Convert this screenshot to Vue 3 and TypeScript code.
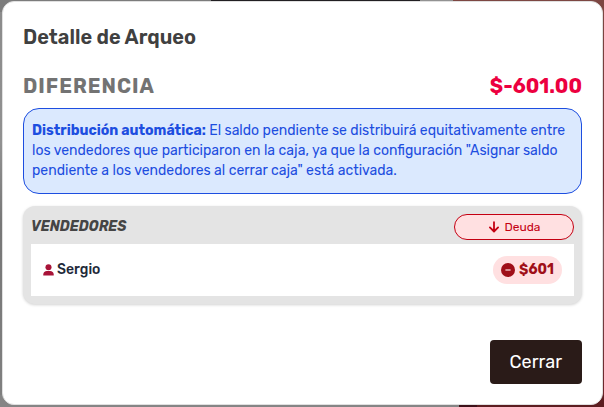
<script setup lang="ts">
import { computed, ref } from 'vue'

interface Seller {
  id: number
  name: string
  debt: number
}

const isOpen = ref(true)
const sellers = ref<Seller[]>([{ id: 1, name: 'Sergio', debt: 601 }])
const difference = computed(() => -sellers.value.reduce((sum, s) => sum + s.debt, 0))
</script>

<template>
  <div class="backdrop">
    <section v-if="isOpen" class="dialog" role="dialog" aria-labelledby="dialog-title">
      <h2 id="dialog-title" class="title">Detalle de Arqueo</h2>

      <div class="difference">
        <span class="difference-label">DIFERENCIA</span>
        <span class="difference-value">${{ difference.toFixed(2) }}</span>
      </div>

      <p class="notice">
        <strong>Distribución automática:</strong> El saldo pendiente se distribuirá
        equitativamente entre los vendedores que participaron en la caja, ya que la
        configuración "Asignar saldo pendiente a los vendedores al cerrar caja" está activada.
      </p>

      <div class="sellers">
        <header class="sellers-head">
          <h3 class="sellers-title">VENDEDORES</h3>
          <span class="debt-tag">
            <svg class="arrow" viewBox="0 0 12 12" aria-hidden="true">
              <path d="M6 1.2v9M1.9 6.4 6 10.5l4.1-4.1" />
            </svg>
            Deuda
          </span>
        </header>
        <ul class="seller-list">
          <li v-for="seller in sellers" :key="seller.id" class="seller">
            <span class="seller-name">
              <svg class="person" viewBox="0 0 12 14" aria-hidden="true">
                <circle cx="6" cy="4" r="3.3" />
                <path d="M.3 13v-1.1C.3 9.6 2.1 8.2 4.2 8.2h3.6c2.1 0 3.9 1.4 3.9 3.7V13z" />
              </svg>
              {{ seller.name }}
            </span>
            <span class="amount">
              <svg class="minus" viewBox="0 0 14 14" aria-hidden="true">
                <circle cx="7" cy="7" r="7" />
                <path d="M4.4 7h5.2" />
              </svg>
              ${{ seller.debt }}
            </span>
          </li>
        </ul>
      </div>

      <footer class="actions">
        <button type="button" class="close" @click="isOpen = false">Cerrar</button>
      </footer>
    </section>
  </div>
</template>

<style>
body {
  margin: 0;
}
</style>

<style scoped>
.backdrop {
  box-sizing: border-box;
  min-height: 100vh;
  padding: 1px 1px 2px 2px;
  display: flex;
  font-family: Rubik, Roboto, "Noto Sans", sans-serif;
  background:
    linear-gradient(90deg, #7c7c7c 35%, #211f22 35% 69.5%, #929292 69.5% 75%, #7d4742 75%) top / 100% 12px no-repeat,
    linear-gradient(90deg, #858585 76%, #3d1119 76% 79%, #5c1d20 79%) bottom / 100% 12px no-repeat,
    linear-gradient(#7c4943, #6f2b32 45%, #7b5356 60%, #6a2025) right / 50% 100% no-repeat,
    linear-gradient(#8b8b8b, #919191 35%, #777 55%, #808080);
}

.dialog {
  box-sizing: border-box;
  flex: 1;
  display: flex;
  flex-direction: column;
  padding: 20px;
  border: 1px solid #e0e0e0;
  border-radius: 12px;
  background: #fff;
}

h2,
h3,
p,
ul {
  margin: 0;
}

.title {
  font-size: 20px;
  line-height: 30px;
  font-weight: 600;
  color: #404040;
}

.difference {
  display: flex;
  justify-content: space-between;
  margin-top: 18px;
  font-size: 20px;
  line-height: 32px;
  font-weight: 700;
}

.difference-label {
  color: #737373;
  letter-spacing: 1px;
}

.difference-value {
  color: #ec003f;
}

.notice {
  margin-top: 6px;
  padding: 12px 8px;
  border: 1px solid #1d4ee0;
  border-radius: 16px;
  background: #dbe9fe;
  color: #1d4ee0;
  font-size: 14px;
  line-height: 20px;
}

.sellers {
  margin-top: 12px;
  padding: 8px;
  border-radius: 12px;
  background: #e4e4e4;
  box-shadow: 0 1px 3px rgb(0 0 0 / 18%);
}

.sellers-head {
  display: flex;
  justify-content: space-between;
}

.sellers-title {
  font-size: 14px;
  line-height: 26px;
  font-weight: 700;
  font-style: italic;
  color: #454545;
}

.debt-tag {
  box-sizing: border-box;
  width: 120px;
  height: 26px;
  display: flex;
  align-items: center;
  justify-content: center;
  gap: 5px;
  border: 1px solid #c40012;
  border-radius: 13px;
  background: #ffe0e1;
  color: #c40012;
  font-size: 12px;
}

.arrow {
  width: 12px;
  height: 12px;
  fill: none;
  stroke: currentColor;
  stroke-width: 1.8;
  stroke-linecap: round;
  stroke-linejoin: round;
}

.seller-list {
  margin-top: 4px;
  padding: 0;
  list-style: none;
  background: #fff;
}

.seller {
  display: flex;
  justify-content: space-between;
  padding: 12px;
}

.seller-name {
  display: flex;
  align-items: center;
  gap: 3px;
  font-size: 14px;
  font-weight: 500;
  line-height: 28px;
  color: #1e2939;
}

.person {
  width: 11px;
  height: 14px;
  fill: #a81338;
}

.amount {
  display: flex;
  align-items: center;
  gap: 4px;
  padding: 0 8px;
  border-radius: 14px;
  background: #ffe0e1;
  color: #9f0f18;
  font-size: 14px;
  line-height: 28px;
  font-weight: 700;
}

.minus {
  width: 14px;
  height: 14px;
  fill: currentColor;
}

.minus path {
  stroke: #ffe0e1;
  stroke-width: 1.2;
}

.actions {
  display: flex;
  justify-content: flex-end;
  margin-top: auto;
}

.close {
  height: 44px;
  padding: 0 20px;
  border: 0;
  border-radius: 4px;
  background: #2a1b18;
  color: #fff;
  font: inherit;
  font-size: 18px;
  cursor: pointer;
}
</style>
